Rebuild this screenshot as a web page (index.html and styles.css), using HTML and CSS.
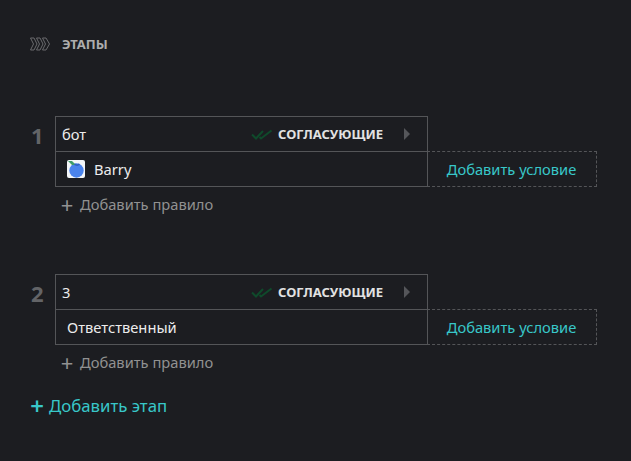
FILE: index.html
```html
<!DOCTYPE html>
<html lang="ru">
<head>
<meta charset="utf-8">
<title>Этапы</title>
<link rel="stylesheet" href="styles.css">
</head>
<body>
<main class="page">
  <header class="head">
    <svg class="chevrons" width="21" height="14" viewBox="0 0 21 14" fill="none" stroke="#6a6b6e" stroke-width="1">
      <path d="M.5 1H4L7 7 4 13H.5L3.500 7z"/>
      <path d="M6.500 1H10L13 7 10 13H6.500L9.500 7z"/>
      <path d="M12.500 1H16L19.500 7 16 13H12.500L15.500 7z"/>
    </svg>
    <h1 class="title">ЭТАПЫ</h1>
  </header>

  <section class="stage stage-first">
    <div class="num">1</div>
    <div class="body">
      <div class="rule">
        <div class="table">
          <div class="row row-top">
            <span class="name">бот</span>
            <svg class="check" width="22" height="11" viewBox="0 0 22 11" fill="none" stroke="#0f4a2b" stroke-width="2"><path d="M1 5.500l4 4L12 2"/><path d="M8.500 8L10 9.500 20.500 1.500"/></svg>
            <span class="label">СОГЛАСУЮЩИЕ</span>
            <span class="arrow"></span>
          </div>
          <div class="row row-bottom">
            <svg class="avatar" width="18" height="18" viewBox="0 0 18 18"><rect width="18" height="18" rx="2" fill="#f4f6f8"/><circle cx="9.500" cy="10.500" r="7.200" fill="#4a83ec"/><path d="M1 1h4l4 4H5z" fill="#3f9d6b"/><path d="M8 3.500l2 1 2-1 1 1.500-3 1-3-1z" fill="#2f5fc0"/></svg>
            <span class="who">Barry</span>
          </div>
        </div>
        <div class="condition">Добавить условие</div>
      </div>
      <div class="add-rule"><span class="plus">+</span>Добавить правило</div>
    </div>
  </section>

  <section class="stage stage-second">
    <div class="num">2</div>
    <div class="body">
      <div class="rule">
        <div class="table">
          <div class="row row-top">
            <span class="name">3</span>
            <svg class="check" width="22" height="11" viewBox="0 0 22 11" fill="none" stroke="#0f4a2b" stroke-width="2"><path d="M1 5.500l4 4L12 2"/><path d="M8.500 8L10 9.500 20.500 1.500"/></svg>
            <span class="label">СОГЛАСУЮЩИЕ</span>
            <span class="arrow"></span>
          </div>
          <div class="row row-bottom">
            <span class="who who-plain">Ответственный</span>
          </div>
        </div>
        <div class="condition">Добавить условие</div>
      </div>
      <div class="add-rule"><span class="plus">+</span>Добавить правило</div>
    </div>
  </section>

  <div class="add-stage"><span class="plus plus-teal">+</span>Добавить этап</div>
</main>
</body>
</html>
```
FILE: styles.css
```css
* { box-sizing: border-box; }
html, body { margin: 0; height: 100%; }
body {
  background: #1c1d21;
  color: #ececec;
  font-family: "Noto Sans", "Open Sans", sans-serif;
  font-size: 14.7px;
  overflow: hidden;
}
.page { padding: 37px 0 0 30px; }
.head { display: flex; align-items: center; gap: 11px; height: 14px; }
.chevrons { display: block; flex: none; }
.title { margin: 0; font-size: 13px; font-weight: 700; color: #adadad; line-height: 14px; }
.stage { display: flex; }
.stage-first { margin-top: 65px; }
.stage-second { margin-top: 53px; }
.num { width: 25px; font-size: 22px; font-weight: 700; color: #636467; line-height: 28px; padding: 5px 0 0 1px; height: 36px; }
.body { display: flex; flex-direction: column; }
.rule { display: flex; align-items: flex-start; }
.table { width: 373px; height: 71px; border: 1px solid #545558; display: flex; flex-direction: column; }
.row { display: flex; align-items: center; }
.row-top { height: 35px; border-bottom: 1px solid #545558; padding-left: 6px; }
.row-bottom { height: 34px; padding-left: 11px; }
.name { flex: 1; color: #ececec; }
.check { display: block; margin-right: 5px; }
.label { font-size: 13px; font-weight: 700; color: #e2e2e2; width: 117px; white-space: nowrap; }
.arrow { width: 0; height: 0; border-left: 6px solid #55565a; border-top: 6px solid transparent; border-bottom: 6px solid transparent; margin: 0 17px 0 9px; }
.avatar { display: block; margin-right: 9px; }
.who { color: #ececec; }
.condition {
  width: 170px; height: 36px; margin: 35px 0 0 -1px;
  border: 1px dashed #545558; border-left: 0;
  color: #38c7c9; display: flex; align-items: center; justify-content: center;
  white-space: nowrap;
}
.add-rule { color: #919191; display: flex; align-items: center; height: 34px; padding-left: 5px; }
.plus { font-size: 22px; font-weight: 400; line-height: 20px; margin-right: 6px; width: 14px; text-align: center; }
.add-stage { display: flex; align-items: center; color: #38c7c9; font-size: 16.8px; margin-top: 15px; }
.plus-teal { font-size: 24px; font-weight: 600; margin-right: 5px; }
```
